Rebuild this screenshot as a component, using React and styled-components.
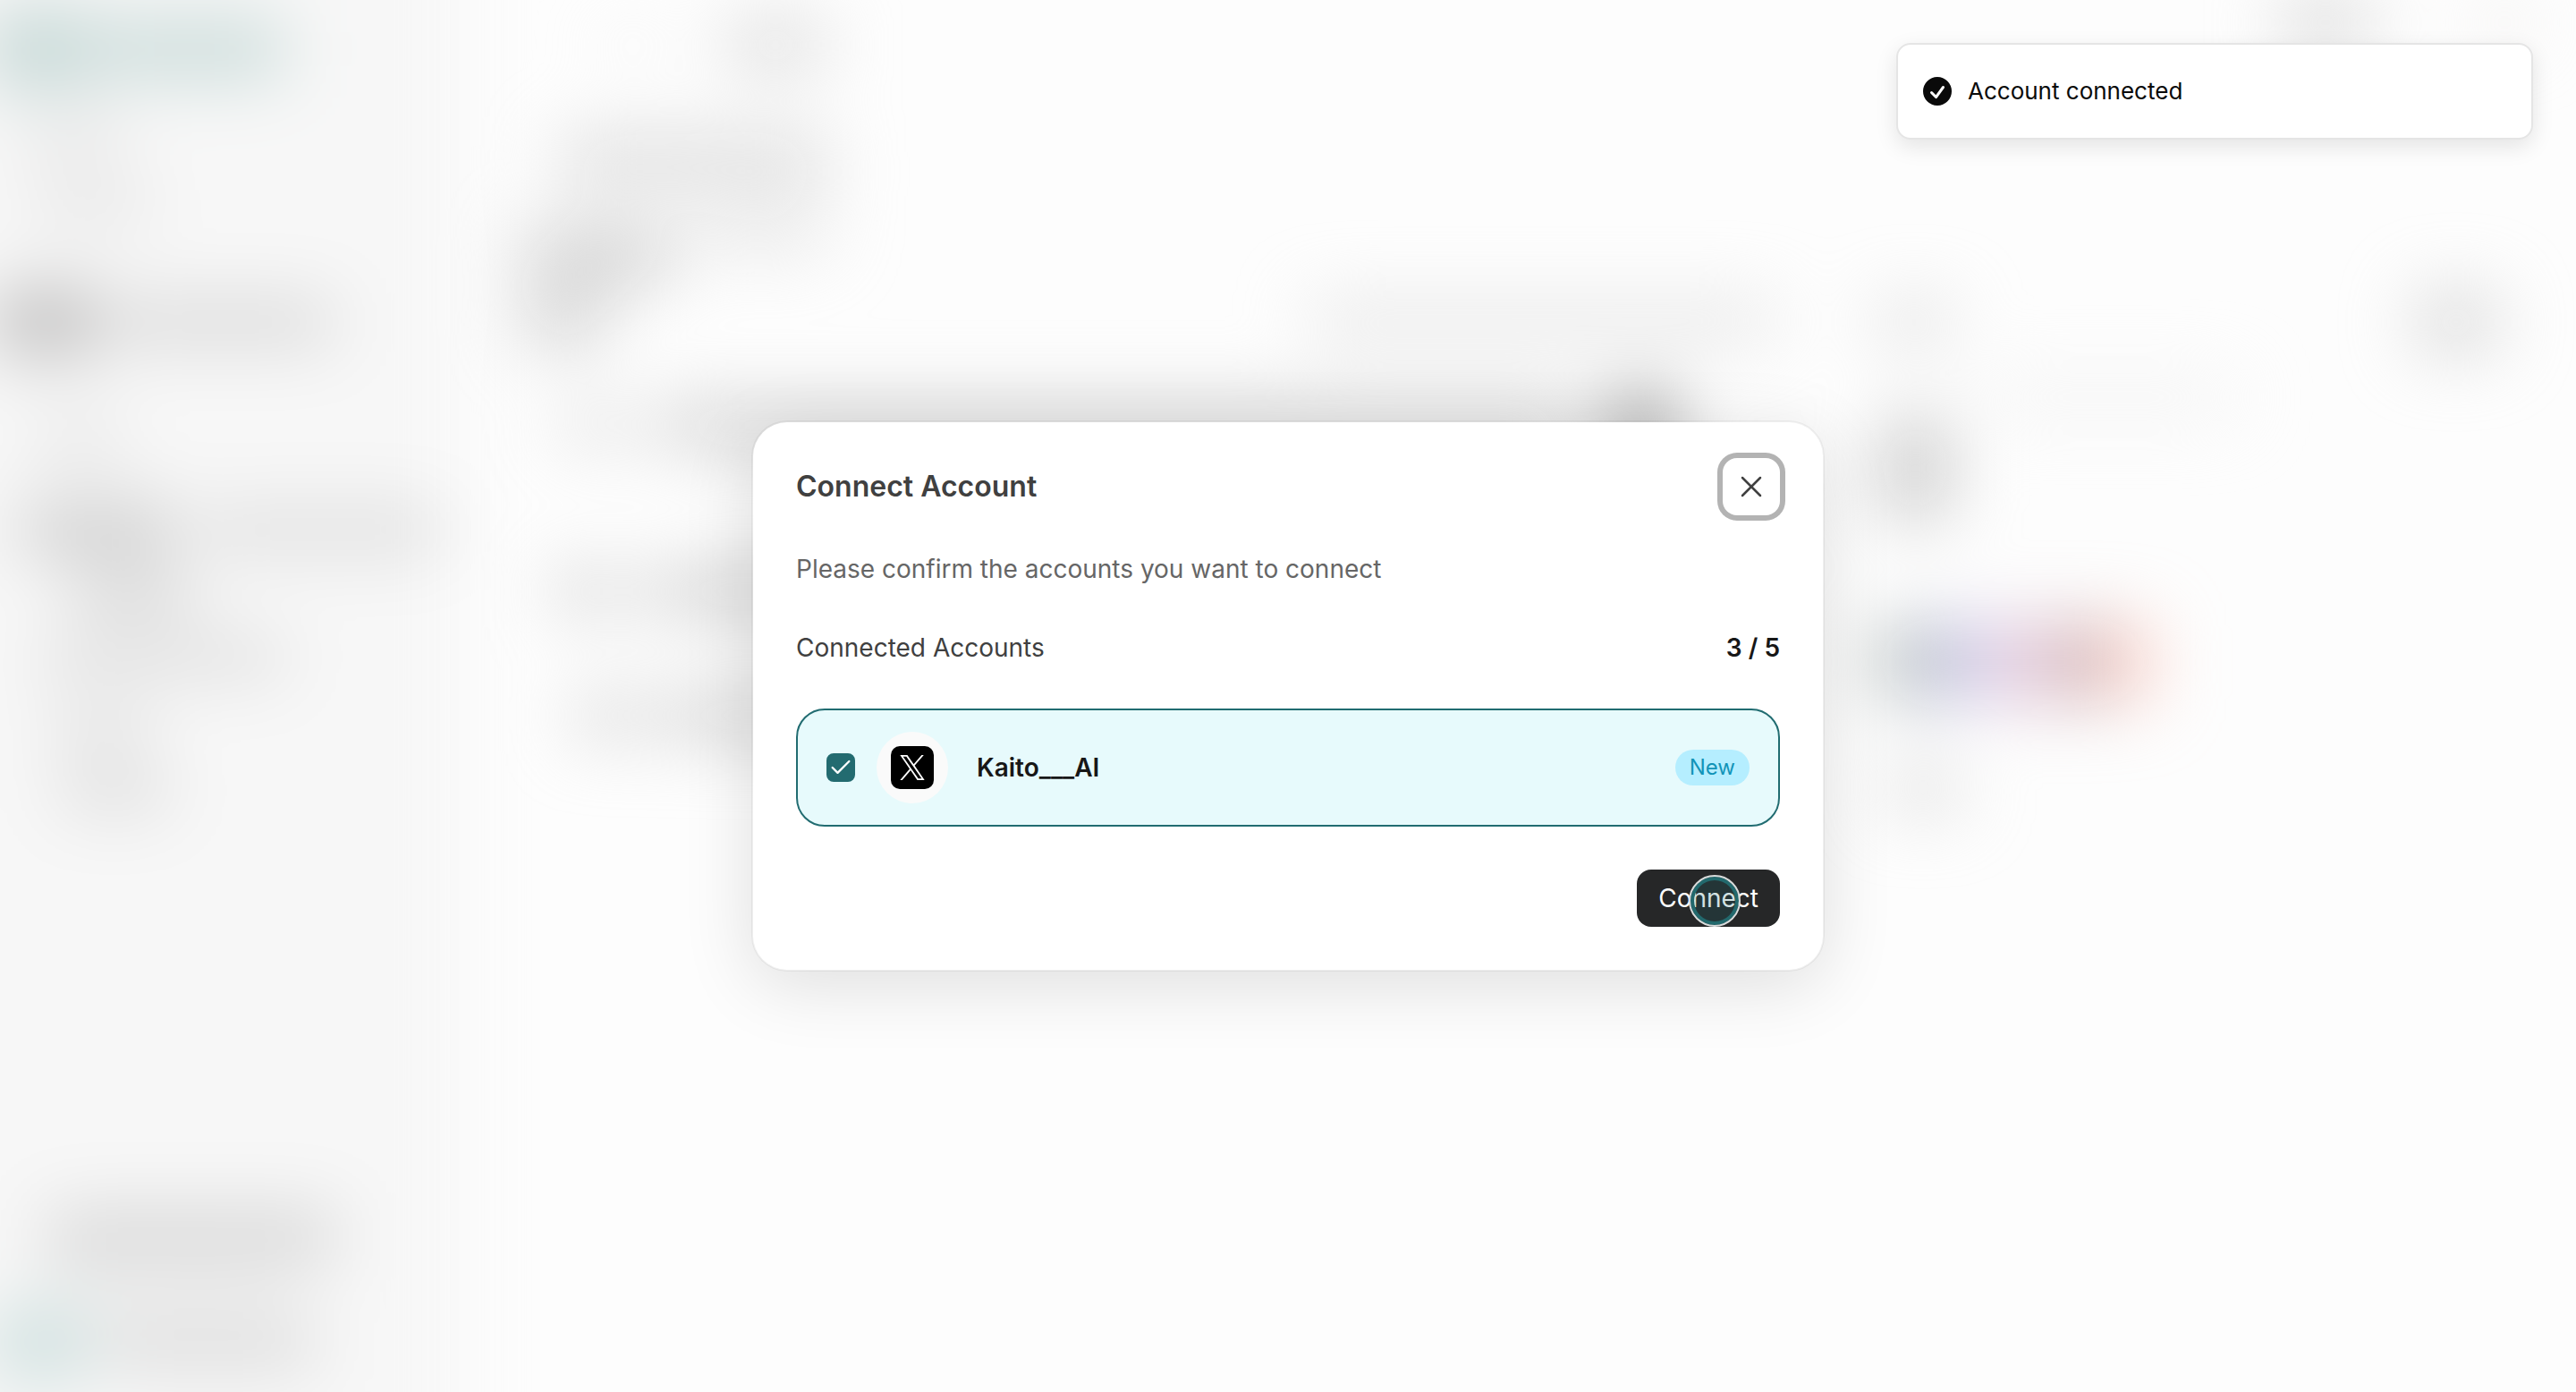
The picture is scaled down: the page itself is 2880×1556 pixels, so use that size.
import React, { useState } from "react";
import styled, { createGlobalStyle } from "styled-components";
import { X, Check } from "lucide-react";

const GlobalStyle = createGlobalStyle`
  *, *::before, *::after { box-sizing: border-box; }
  body {
    margin: 0;
    background: #fdfdfd;
    font-family: Inter, "Liberation Sans", sans-serif;
    font-size: 28px;
    line-height: 40px;
    color: #171717;
  }
  h2, p { margin: 0; }
`;

/* ---------- Blurred page behind the dialog ---------- */

const Backdrop = styled.div`
  position: fixed;
  inset: 0;
  overflow: hidden;
  background: #fdfdfd;
`;

const PageGhost = styled.div`
  display: grid;
  grid-template-columns: 620px minmax(0, 1fr) 880px;
  margin: -100px;
  min-height: calc(100vh + 200px);
  filter: blur(40px);
`;

const GhostColumn = styled.div`
  display: flex;
  flex-direction: column;
  padding: 100px 0;
  padding-left: ${(p) => p.$inset}px;
  background: ${(p) => p.$bg || "transparent"};
`;

const GhostRow = styled.div`
  display: flex;
  align-items: center;
  flex: none;
  gap: ${(p) => p.$gap || 0}px;
  height: ${(p) => p.$h}px;
  padding-left: ${(p) => p.$start || 0}px;
`;

const Ghost = styled.span`
  flex: none;
  width: ${(p) => p.$w}px;
  height: ${(p) => p.$h || 28}px;
  border-radius: ${(p) => p.$r || 8}px;
  background: ${(p) => p.$c || "#d8d8d8"};
  opacity: 0.85;
`;

const Spring = styled.span`
  flex: 1;
`;

function GhostPage() {
  return (
    <Backdrop aria-hidden="true">
      <PageGhost>
        <GhostColumn $inset={88} $bg="#f7f7f7">
          <GhostRow $h={110} $gap={8}>
            <Ghost $w={112} $h={84} $c="#b8d0ce" />
            <Ghost $w={210} $h={60} $c="#bdd3d1" />
          </GhostRow>
          <GhostRow $h={90} $start={40}>
            <Ghost $w={110} $c="#d6d6d6" />
          </GhostRow>
          <GhostRow $h={60} $start={48}>
            <Ghost $w={130} $c="#d6d6d6" />
          </GhostRow>
          <GhostRow $h={200} $gap={12}>
            <Ghost $w={128} $h={72} $r={36} $c="#b2b0b0" />
            <Ghost $w={244} $h={36} $c="#c4c4c4" />
          </GhostRow>
          <GhostRow $h={60} $start={56}>
            <Ghost $w={90} $c="#d2d2d2" />
          </GhostRow>
          <GhostRow $h={144} $gap={30} $start={36}>
            <Ghost $w={170} $h={52} $c="#c0c0c0" />
            <Ghost $w={270} $h={40} $c="#d2d2d2" />
          </GhostRow>
          <GhostRow $h={0} $start={96}>
            <Ghost $w={130} $c="#bababa" />
          </GhostRow>
          <GhostRow $h={140} $start={60}>
            <Ghost $w={270} $c="#c8c8c8" />
          </GhostRow>
          <GhostRow $h={20} $start={70}>
            <Ghost $w={110} $c="#cccccc" />
          </GhostRow>
          <GhostRow $h={120} $start={80}>
            <Ghost $w={120} $c="#c4c4c4" />
          </GhostRow>
          <Spring />
          <GhostRow $h={76} $start={64}>
            <Ghost $w={324} $h={52} $c="#cbcbcb" />
          </GhostRow>
          <GhostRow $h={26} $start={80}>
            <Ghost $w={250} $h={8} $c="#d6d6d6" />
          </GhostRow>
          <GhostRow $h={110} $gap={14}>
            <Ghost $w={114} $h={84} $r={36} $c="#c6dad9" />
            <Ghost $w={236} $h={44} $c="#cecece" />
          </GhostRow>
        </GhostColumn>

        <GhostColumn $inset={66}>
          <GhostRow $h={100} $start={96} $gap={80}>
            <Ghost $w={50} $c="#f0f0f0" />
            <Ghost $w={110} $h={52} $c="#d6d6d6" />
          </GhostRow>
          <GhostRow $h={160} $start={40}>
            <Ghost $w={300} $h={52} $c="#d4d4d4" />
          </GhostRow>
          <GhostRow $h={0} $start={190}>
            <Ghost $w={150} $h={28} $c="#d6d6d6" />
          </GhostRow>
          <GhostRow $h={50}>
            <Ghost $w={164} $h={56} $c="#c4c4c4" />
          </GhostRow>
          <GhostRow $h={96} $gap={790}>
            <Ghost $w={88} $h={52} $c="#c4c4c4" />
            <Ghost $w={520} $h={36} $c="#dedede" />
          </GhostRow>
          <GhostRow $h={140} $start={40} $gap={30}>
            <Ghost $w={84} $c="#cccccc" />
            <Ghost $w={1030} $h={48} $c="#c8c8c8" />
            <Ghost $w={72} $h={72} $r={34} $c="#747474" />
          </GhostRow>
          <GhostRow $h={230} $start={40} $gap={36}>
            <Ghost $w={64} $h={44} $c="#c4c4c4" />
            <Ghost $w={400} $h={44} $c="#c2c2c2" />
          </GhostRow>
          <GhostRow $h={48} $start={60} $gap={24}>
            <Ghost $w={64} $h={44} $c="#cacaca" />
            <Ghost $w={400} $h={44} $c="#c8c8c8" />
          </GhostRow>
        </GhostColumn>

        <GhostColumn $inset={0}>
          <GhostRow $h={50} $start={450} $gap={120}>
            <Ghost $w={100} $h={48} $c="#cecece" />
            <Ghost $w={60} $h={32} $c="#ece9e6" />
          </GhostRow>
          <GhostRow $h={256} />
          <GhostRow $h={108} $gap={520}>
            <Ghost $w={80} $h={36} $c="#d2d2d2" />
            <Ghost $w={92} $h={64} $r={28} $c="#d0d0d0" />
          </GhostRow>
          <GhostRow $h={60} $start={120}>
            <Ghost $w={280} $h={32} $c="#f1f1f1" />
          </GhostRow>
          <GhostRow $h={100} $start={6}>
            <Ghost $w={70} $h={120} $r={32} $c="#bebebe" />
          </GhostRow>
          <GhostRow $h={60} />
          <GhostRow $h={212}>
            <Ghost $w={62} $h={84} $c="#adb6b4" />
            <Ghost $w={64} $h={84} $c="#bebee6" />
            <Ghost $w={68} $h={84} $c="#e6c3d8" />
            <Ghost $w={56} $h={84} $c="#c0a4a8" />
            <Ghost $w={52} $h={84} $c="#fdc4b9" />
          </GhostRow>
          <GhostRow $h={72} $start={10}>
            <Ghost $w={80} $h={40} $c="#d2d2d2" />
          </GhostRow>
        </GhostColumn>
      </PageGhost>
    </Backdrop>
  );
}

/* ---------- Toast ---------- */

const Toast = styled.div`
  position: fixed;
  top: 48px;
  right: 48px;
  display: flex;
  align-items: center;
  gap: 14px;
  width: 712px;
  max-width: calc(100vw - 96px);
  padding: 32px 24px;
  border: 2px solid #e5e5e5;
  border-radius: 16px;
  background: #ffffff;
  box-shadow: 0 8px 24px rgba(0, 0, 0, 0.1);
  color: #0a0a0a;
  font-size: 26px;
`;

const ToastIcon = styled.svg`
  flex: none;
  width: 40px;
  height: 40px;
  fill: currentColor;
`;

/* ---------- Dialog ---------- */

const Overlay = styled.div`
  position: fixed;
  inset: 0;
  display: grid;
  place-items: center;
`;

const Dialog = styled.section`
  width: 1200px;
  max-width: 100%;
  padding: 40px 48px 48px;
  border: 2px solid rgba(0, 0, 0, 0.05);
  border-radius: 40px;
  background: #ffffff;
  background-clip: padding-box;
  box-shadow: 0 16px 80px rgba(0, 0, 0, 0.12);
`;

const DialogHeader = styled.header`
  display: flex;
  align-items: center;
  justify-content: space-between;
  margin-bottom: 40px;
`;

const Title = styled.h2`
  font-size: 32px;
  font-weight: 600;
  color: #404040;
`;

const CloseButton = styled.button`
  display: grid;
  place-items: center;
  width: 64px;
  height: 64px;
  padding: 0;
  border: 0;
  border-radius: 16px;
  background: #ffffff;
  color: #404040;
  box-shadow: 0 0 0 6px #b3b3b3;
  outline: none;
  cursor: pointer;
`;

const Description = styled.p`
  color: #666666;
`;

const Summary = styled.div`
  display: flex;
  justify-content: space-between;
  margin: 48px 0;
  color: #404040;
`;

const Count = styled.span`
  font-weight: 600;
  color: #171717;
`;

const AccountRow = styled.label`
  display: flex;
  align-items: center;
  padding: 24px 32px;
  border: 2px solid #216c71;
  border-radius: 32px;
  background: #e7fafc;
  cursor: pointer;
`;

const CheckWrap = styled.span`
  display: grid;
  place-items: center;
  margin-right: 24px;
  color: #ffffff;

  > * {
    grid-area: 1 / 1;
  }

  > svg {
    pointer-events: none;
  }
`;

const CheckInput = styled.input`
  appearance: none;
  width: 32px;
  height: 32px;
  margin: 0;
  border: 2px solid #216c71;
  border-radius: 8px;
  background: #ffffff;

  &:checked {
    border-color: #236b70;
    background: #236b70;
  }
`;

const Avatar = styled.span`
  display: grid;
  place-items: center;
  width: 80px;
  height: 80px;
  margin-right: 32px;
  border-radius: 50%;
  background: #fafafa;
`;

const NetworkBadge = styled.span`
  display: grid;
  place-items: center;
  width: 48px;
  height: 48px;
  border-radius: 10px;
  background: #000000;
`;

const AccountName = styled.span`
  flex: 1;
  font-weight: 600;
`;

const Tag = styled.span`
  padding: 0 16px;
  border-radius: 20px;
  background: #b5eeff;
  color: #1294b8;
  font-size: 24px;
`;

const DialogFooter = styled.footer`
  display: flex;
  justify-content: flex-end;
  margin-top: 48px;
`;

const ConnectButton = styled.button`
  position: relative;
  height: 64px;
  padding: 0 24px;
  border: 0;
  border-radius: 16px;
  background: #262728;
  color: #ffffff;
  font: inherit;
  cursor: pointer;
`;

const Pointer = styled.span`
  position: absolute;
  left: 58px;
  top: 6px;
  width: 58px;
  height: 58px;
  border: 2px solid #d9dcdc;
  border-radius: 50%;
  background: rgba(32, 110, 115, 0.2);
  box-shadow: inset 0 0 0 4px #22696d;
  pointer-events: none;
`;

function XLogo() {
  return (
    <svg width="28" height="28" viewBox="0 0 1200 1227" fill="#ffffff" aria-hidden="true">
      <path d="M714.163 519.284L1160.89 0H1055.03L667.137 450.887L357.328 0H0L468.492 681.821L0 1226.37H105.866L515.491 750.218L842.672 1226.37H1200L714.137 519.284H714.163ZM569.165 687.828L521.697 619.934L144.011 79.6944H306.615L611.412 515.685L658.88 583.579L1055.08 1150.3H892.476L569.165 687.854V687.828Z" />
    </svg>
  );
}

export default function App() {
  const [checked, setChecked] = useState(true);

  return (
    <>
      <GlobalStyle />
      <GhostPage />
      <Overlay>
        <Dialog role="dialog" aria-labelledby="dialog-title" aria-describedby="dialog-text">
          <DialogHeader>
            <Title id="dialog-title">Connect Account</Title>
            <CloseButton type="button" aria-label="Close">
              <X size={40} strokeWidth={1.5} />
            </CloseButton>
          </DialogHeader>
          <Description id="dialog-text">
            Please confirm the accounts you want to connect
          </Description>
          <Summary>
            <span>Connected Accounts</span>
            <Count>3 / 5</Count>
          </Summary>
          <AccountRow htmlFor="account-kaito">
            <CheckWrap>
              <CheckInput
                id="account-kaito"
                type="checkbox"
                checked={checked}
                onChange={(e) => setChecked(e.target.checked)}
              />
              {checked && <Check size={28} strokeWidth={2} />}
            </CheckWrap>
            <Avatar>
              <NetworkBadge>
                <XLogo />
              </NetworkBadge>
            </Avatar>
            <AccountName>Kaito___AI</AccountName>
            <Tag>New</Tag>
          </AccountRow>
          <DialogFooter>
            <ConnectButton type="button">
              Connect
              <Pointer />
            </ConnectButton>
          </DialogFooter>
        </Dialog>
      </Overlay>
      <Toast role="status">
        <ToastIcon viewBox="0 0 20 20" aria-hidden="true">
          <path
            fillRule="evenodd"
            clipRule="evenodd"
            d="M10 18a8 8 0 100-16 8 8 0 000 16zm3.857-9.809a.75.75 0 00-1.214-.882l-3.483 4.79-1.88-1.88a.75.75 0 10-1.06 1.061l2.5 2.5a.75.75 0 001.137-.089l4-5.5z"
          />
        </ToastIcon>
        <span>Account connected</span>
      </Toast>
    </>
  );
}
